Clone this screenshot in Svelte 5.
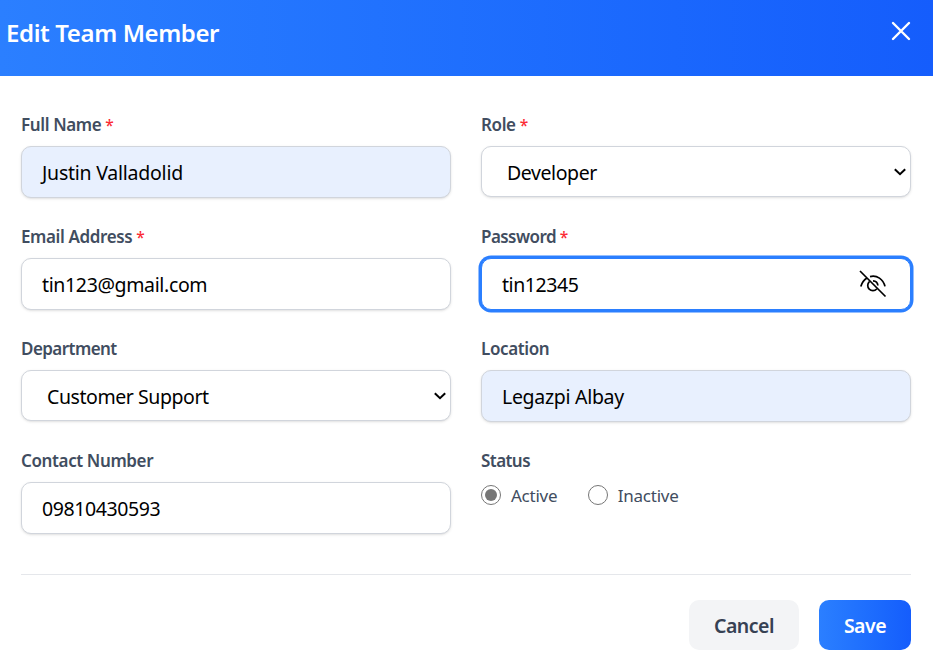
<script>
  let status = $state('active');
</script>

{#snippet chevron()}
  <svg class="chevron" width="12" height="8" viewBox="0 0 12 8" fill="none" stroke="#000" stroke-width="2">
    <path d="M.8 1.2 6 6.2l5.2-5" />
  </svg>
{/snippet}

<div class="modal">
  <header>
    <h2>Edit Team Member</h2>
    <button class="close" aria-label="Close">
      <svg width="20" height="20" viewBox="0 0 20 20" fill="none" stroke="#fff" stroke-width="2.4" stroke-linecap="round">
        <path d="m2 2 16 16M18 2 2 18" />
      </svg>
    </button>
  </header>

  <form>
    <div class="grid">
      <div class="field">
        <div class="label">Full Name <b>*</b></div>
        <div class="control filled"><span class="t-name">Justin Valladolid</span></div>
      </div>
      <div class="field">
        <div class="label">Role <b>*</b></div>
        <div class="control select"><span class="t-dev">Developer</span>{@render chevron()}</div>
      </div>
      <div class="field">
        <div class="label">Email Address <b>*</b></div>
        <div class="control"><span class="t-mail">tin123@gmail.com</span></div>
      </div>
      <div class="field">
        <div class="label l-tight">Password <b>*</b></div>
        <div class="control focused">
          <span class="t-pass">tin12345</span>
          <svg class="eye" width="28" height="28" viewBox="0 0 28 28" fill="none" stroke="#000" stroke-width="1.7">
            <path d="m1 1 25.500 25.500M1.800 16.600C3 12.500 5.200 9.600 8 8M11 6.600c7-1.800 13.200 2.600 15 9.800M10.400 11.600a5.200 5.200 0 1 0 7.300 7.400M14 10.800a5.200 5.200 0 0 1 4.900 4.700" />
          </svg>
        </div>
      </div>
      <div class="field">
        <div class="label l-tight">Department</div>
        <div class="control select"><span class="t-dept">Customer Support</span>{@render chevron()}</div>
      </div>
      <div class="field">
        <div class="label">Location</div>
        <div class="control filled"><span>Legazpi Albay</span></div>
      </div>
      <div class="field">
        <div class="label">Contact Number</div>
        <div class="control"><span class="t-num">09810430593</span></div>
      </div>
      <div class="field">
        <div class="label l-tight">Status</div>
        <div class="radios">
          <label><input type="radio" value="active" bind:group={status} /><span>Active</span></label>
          <label><input type="radio" value="inactive" bind:group={status} /><span>Inactive</span></label>
        </div>
      </div>
    </div>

    <footer>
      <button type="button" class="cancel">Cancel</button>
      <button type="button" class="save">Save</button>
    </footer>
  </form>
</div>

<style>
  :global(body) { background: #fff; overflow: hidden; }
  .modal { width: 933px; height: 666px; box-sizing: border-box; font-family: "Noto Sans", "Open Sans", sans-serif; }
  .modal * { box-sizing: border-box; }
  header {
    height: 76px; padding: 0 22px 0 6px; display: flex; justify-content: space-between; align-items: flex-start;
    background: linear-gradient(to right in oklab, #2b7fff, #155dfc);
  }
  h2 { margin: 15px 0 0; font-size: 24px; line-height: 35px; font-weight: 600; color: #fff; letter-spacing: -.39px; white-space: nowrap; }
  button { border: 0; font-family: inherit; padding: 0; }
  .close { display: flex; margin-top: 21px; background: none; }
  form { padding: 35px 22px 0 21px; }
  .grid { display: grid; grid-template-columns: 430px 430px; column-gap: 30px; grid-auto-rows: 112px; }
  .label { height: 25px; margin-bottom: 10px; line-height: 27px; font-size: 17px; font-weight: 600; color: #414d60; white-space: nowrap; letter-spacing: -.38px; }
  .label b { font-weight: 500; font-size: 15.5px; line-height: 1; color: #fb2c36; }
  .l-tight { letter-spacing: -.56px; }
  .control {
    height: 52px; border: 1px solid #d1d5dc; border-radius: 10px; padding: 2px 20px 0; display: flex; align-items: center;
    font-size: 19.5px; line-height: 28px; color: #000; white-space: nowrap; letter-spacing: -.3px;
    box-shadow: 0 1px 3px rgba(0,0,0,.1), 0 1px 2px -1px rgba(0,0,0,.1); background: #fff;
  }
  .filled { background: #e8f0fe; }
  .select { height: 51px; padding: 2px 4px 0 25px; justify-content: space-between; }
  .chevron, .eye { margin-top: -2px; }
  .focused { border-color: #2b7fff; box-shadow: 0 0 0 2.5px #2b7fff; justify-content: space-between; padding-right: 23px; }
  .t-name { letter-spacing: -.24px; }
  .t-dev { letter-spacing: -.42px; }
  .t-mail { letter-spacing: -.36px; }
  .t-pass { letter-spacing: -.44px; }
  .t-dept { letter-spacing: -.43px; }
  .t-num { letter-spacing: -.4px; }
  .radios { display: flex; gap: 30.500px; height: 26px; }
  .radios label { display: flex; align-items: center; gap: 10px; font-size: 17px; color: #414d60; letter-spacing: -.25px; }
  input { appearance: none; width: 20px; height: 20px; margin: 0; border: 1.5px solid #767676; border-radius: 50%; display: grid; place-items: center; }
  input:checked::before { content: ""; width: 12px; height: 12px; border-radius: 50%; background: #767676; }
  footer { margin-top: 15px; border-top: 1px solid #e5e7eb; padding-top: 25px; display: flex; justify-content: flex-end; gap: 20px; width: 890px; }
  footer button { height: 50px; border-radius: 10px; font-size: 19.5px; font-weight: 600; line-height: 51px; }
  .cancel { width: 110px; background: #f3f4f6; color: #364153; letter-spacing: -.5px; }
  .save { width: 92px; color: #fff; background: linear-gradient(to right in oklab, #2b7fff, #155dfc); letter-spacing: -.5px; }
</style>
